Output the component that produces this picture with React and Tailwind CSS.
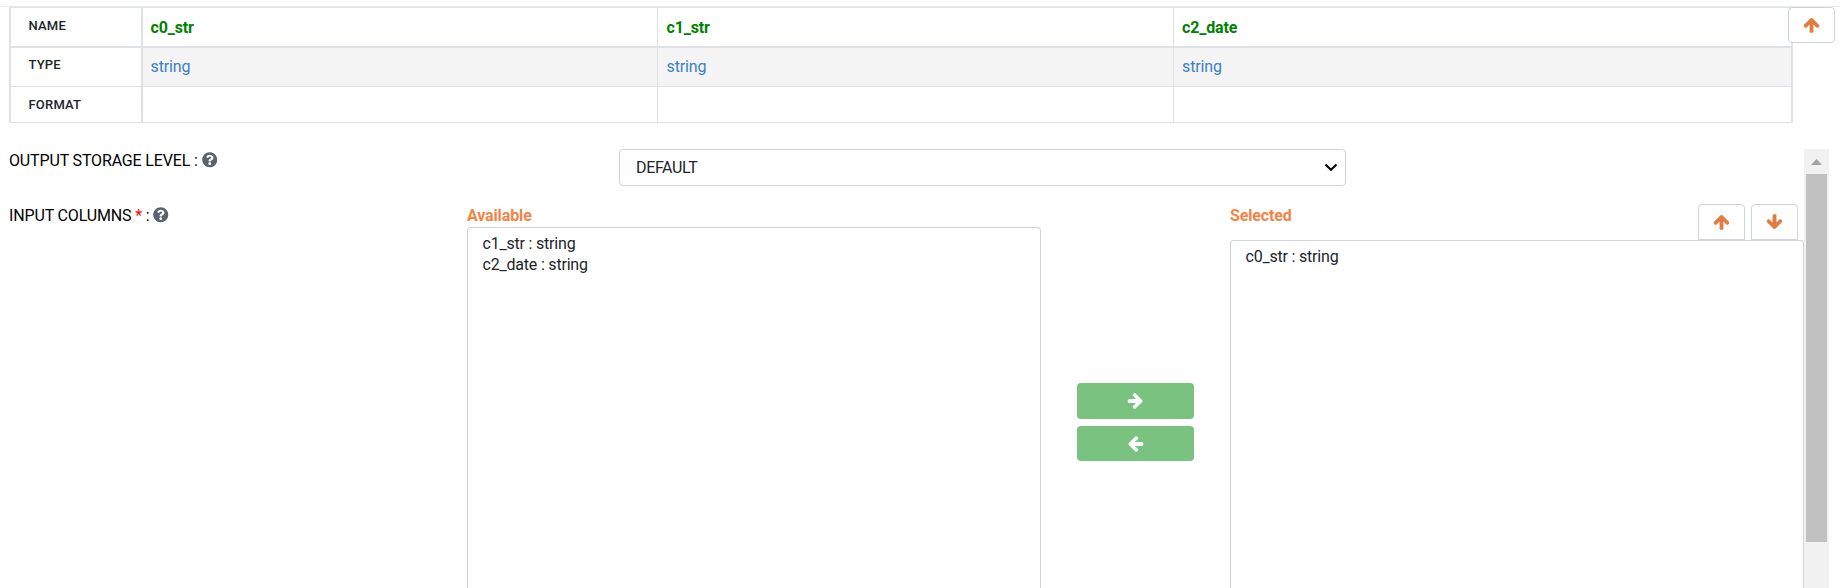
import { FaQuestionCircle } from "react-icons/fa";

const columns = [
  { name: "c0_str", type: "string", width: "w-[515px]", pad: "pl-[7.5px]" },
  { name: "c1_str", type: "string", width: "w-[516px]", pad: "pl-[8.5px]" },
  { name: "c2_date", type: "string", width: "flex-1", pad: "pl-2" },
];

function Arrow({ className = "" }) {
  return (
    <svg viewBox="0 0 1664 1792" className={`h-[18px] w-[17px] ${className}`} fill="currentColor">
      <path d="M1611 971q0 51-37 90l-75 75q-38 38-91 38-54 0-90-38l-294-293v704q0 52-37.5 84.5t-90.5 32.5h-128q-53 0-90.500-32.500t-37.500-84.500v-704l-294 293q-36 38-90 38t-90-38l-75-75q-38-38-38-90 0-53 38-91l651-651q35-37 90-37 54 0 91 37l651 651q37 39 37 91z" />
    </svg>
  );
}

function SchemaRow({ label, height, labelPad, children, className = "" }) {
  return (
    <div className={`flex border-[#dee2e6] ${height} ${className}`}>
      <div className={`w-[132px] shrink-0 border-r-2 border-[#dee2e6] bg-white pl-[17.5px] text-[13px] leading-5 font-medium tracking-[0.2px] text-[#212529] ${labelPad}`}>
        {label}
      </div>
      {children}
    </div>
  );
}

function cellClass(i) {
  return `${columns[i].width} ${columns[i].pad} ${i < columns.length - 1 ? "border-r border-[#dee2e6]" : ""}`;
}

function SchemaTable() {
  return (
    <div className="ml-[9px] w-[1784px] border-x-2 border-t border-[#dee2e6]">
      <SchemaRow label="NAME" height="h-10" labelPad="pt-2" className="border-b-2">
        {columns.map((c, i) => (
          <div key={c.name} className={`${cellClass(i)} pt-2 leading-6 font-bold text-[#008000]`}>
            {c.name}
          </div>
        ))}
      </SchemaRow>
      <SchemaRow label="TYPE" height="h-[39px]" labelPad="pt-[7px]" className="border-b bg-[#f4f4f4]">
        {columns.map((c, i) => (
          <div key={c.name} className={`${cellClass(i)} pt-[7px] leading-6 text-[#3a80c4]`}>
            {c.type}
          </div>
        ))}
      </SchemaRow>
      <SchemaRow label="FORMAT" height="h-9" labelPad="pt-2" className="border-b">
        {columns.map((c, i) => (
          <div key={c.name} className={cellClass(i)} />
        ))}
      </SchemaRow>
    </div>
  );
}

function IconButton({ arrow = "", className = "" }) {
  return (
    <button className={`flex h-9 w-[47px] items-center justify-center border border-[#ced4da] bg-white pr-px pb-px text-[#e27c43] ${className}`}>
      <Arrow className={arrow} />
    </button>
  );
}

function MoveButton({ arrow, className }) {
  return (
    <button className={`flex w-[117px] items-center justify-center rounded bg-[#79c27f] pr-px text-white ${className}`}>
      <Arrow className={arrow} />
    </button>
  );
}

function Label({ children }) {
  return (
    <div className="flex items-start gap-1 leading-6 tracking-[-0.15px] text-black">
      <span>{children}</span>
      <FaQuestionCircle className="mt-[3px] size-[15.5px] text-[#5a636d]" />
    </div>
  );
}

function List({ items, className }) {
  return (
    <div className={`w-[574px] rounded-t border border-b-0 border-[#ced4da] pl-[14.5px] leading-[21px] tracking-[-0.2px] text-[#212529] ${className}`}>
      {items.map((t) => (
        <div key={t}>{t}</div>
      ))}
    </div>
  );
}

function Scrollbar() {
  return (
    <div className="flex w-[25px] shrink-0 flex-col items-center bg-[#f1f1f1]">
      <div className="flex h-[25px] items-center justify-center">
        <svg width="11" height="6" viewBox="0 0 11 6" className="text-[#a3a3a3]">
          <path d="M5.5 0 11 6H0Z" fill="currentColor" />
        </svg>
      </div>
      <div className="h-[368px] w-[21px] bg-[#c1c1c1]" />
    </div>
  );
}

export default function App() {
  return (
    <div className="flex h-[588px] w-[1840px] flex-col overflow-hidden bg-white pt-1.5 font-['Roboto',sans-serif] text-base tracking-[-0.13px]">
      <header className="relative border-t border-[#e9ecef]">
        <SchemaTable />
        <div className="absolute top-0 right-[5px]">
          <IconButton className="rounded" />
        </div>
      </header>
      <main className="mt-[26px] flex min-h-0 flex-1">
        <div className="flex w-[1804px] shrink-0 flex-col">
          <div className="flex h-[55px] items-start pl-[9px]">
            <div className="w-[610px]">
              <Label>OUTPUT STORAGE LEVEL :</Label>
            </div>
            <div className="flex h-[37px] w-[727px] items-center justify-between rounded border border-[#ced4da] pr-[7px] pl-4 text-[#212529]">
              <span className="tracking-[-0.35px]">DEFAULT</span>
              <svg width="14" height="9" viewBox="0 0 14 9" fill="none" className="text-black">
                <path d="M1.5 1.5 7 6.8l5.500-5.300" stroke="currentColor" strokeWidth="2.1" />
              </svg>
            </div>
          </div>
          <div className="flex min-h-0 flex-1 pl-[9px]">
            <div className="w-[458px] shrink-0">
              <Label>
                INPUT COLUMNS <span className="text-[#ff0000]">*</span> :
              </Label>
            </div>
            <div className="flex w-[574px] shrink-0 flex-col">
              <div className="h-[23px] leading-6 font-bold text-[#f58345]">Available</div>
              <List items={["c1_str : string", "c2_date : string"]} className="flex-1 pt-[5px]" />
            </div>
            <div className="flex w-[189px] shrink-0 flex-col items-center gap-[7px] pt-[179px]">
              <MoveButton arrow="rotate-90" className="h-9" />
              <MoveButton arrow="-rotate-90" className="h-[35px] pt-px" />
            </div>
            <div className="flex w-[574px] shrink-0 flex-col">
              <div className="flex h-9 justify-between">
                <div className="leading-6 font-bold text-[#f58345]">Selected</div>
                <div className="flex gap-1.5 pr-1.5">
                  <IconButton className="rounded-t" />
                  <IconButton arrow="rotate-180" className="rounded-t" />
                </div>
              </div>
              <List items={["c0_str : string"]} className="flex-1 pt-[5px]" />
            </div>
          </div>
        </div>
        <Scrollbar />
      </main>
    </div>
  );
}
